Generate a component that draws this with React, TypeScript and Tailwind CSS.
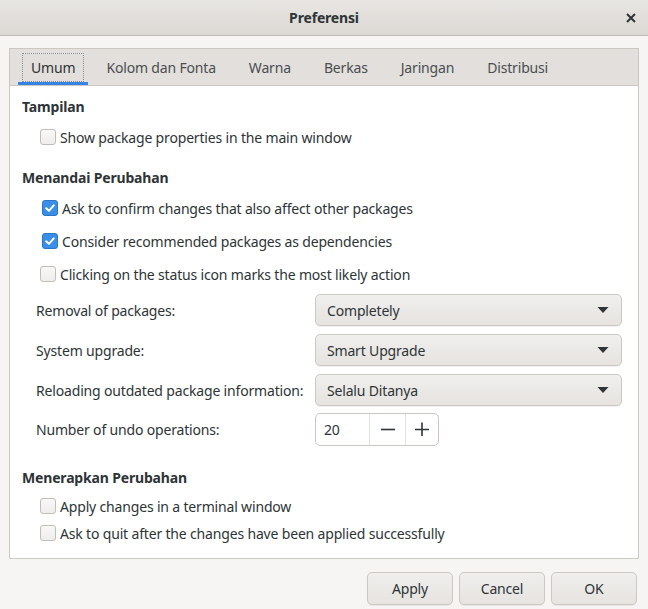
import React from 'react';

const font = { fontFamily: '"Noto Sans", "Liberation Sans", sans-serif' };

function CheckBox({ checked }: { checked?: boolean }) {
  if (checked) {
    return (
      <span className="flex h-[16px] w-[16px] shrink-0 items-center justify-center rounded-[3px] border border-[#2a76c6] bg-[#3a8ee6]">
        <svg width="12" height="12" viewBox="0 0 12 12">
          <path d="M2.2 6.2 L4.9 8.8 L9.8 3.4" fill="none" stroke="white" strokeWidth="2" strokeLinecap="round" strokeLinejoin="round" />
        </svg>
      </span>
    );
  }
  return <span className="h-[16px] w-[16px] shrink-0 rounded-[3px] border border-[#c3bdb7] bg-gradient-to-b from-[#f8f8f7] to-[#efedec]" />;
}

function Check({ label, checked }: { label: string; checked?: boolean }) {
  return (
    <div className={checked ? 'flex h-[26px] items-center gap-[4px] pl-[20px]' : 'flex h-[26px] items-center gap-[4px] pl-[18px]'}>
      <CheckBox checked={checked} />
      <span>{label}</span>
    </div>
  );
}

function Combo({ label, value }: { label: string; value: string }) {
  return (
    <div className="flex h-[32px] items-center">
      <span className="w-[293px] shrink-0 whitespace-nowrap pl-[14px]">{label}</span>
      <div className="flex h-[32px] w-[307px] items-center justify-between rounded-[5px] border border-[#cdc7c2] bg-gradient-to-b from-[#f0efed] to-[#e6e3e0] pl-[11px] pr-[12px] shadow-[0_1px_0_rgba(0,0,0,0.06)]">
        <span>{value}</span>
        <svg width="12" height="8" viewBox="0 0 12 8">
          <path d="M0.5 1 L11.5 1 L6 7 Z" fill="#2e3436" />
        </svg>
      </div>
    </div>
  );
}

export default function App() {
  const tabs = ['Umum', 'Kolom dan Fonta', 'Warna', 'Berkas', 'Jaringan', 'Distribusi'];

  return (
    <div className="flex h-[609px] w-[648px] flex-col bg-[#f6f5f4] text-[14px] tracking-[-0.17px] text-[#2e3436]" style={font}>
      {/* title bar */}
      <div className="relative flex h-[36px] shrink-0 items-center justify-center border-b border-[#c0bbb6] bg-gradient-to-b from-[#e8e6e3] to-[#dcd8d4]">
        <span className="font-bold">Preferensi</span>
        <svg className="absolute right-[12px] top-[13px]" width="10" height="10" viewBox="0 0 10 10">
          <path d="M1 1 L9 9 M9 1 L1 9" stroke="#2e3436" strokeWidth="2" />
        </svg>
      </div>

      <div className="flex flex-1 flex-col px-[9px] pt-[12px]">
        {/* notebook */}
        <div className="flex h-[511px] flex-col border border-[#cdc7c2]">
          <div className="flex h-[37px] shrink-0 items-stretch gap-[9px] border-b border-[#cdc7c2] bg-[#e2dfdc] pl-[8px]">
            {tabs.map((t, i) => (
              <div
                key={t}
                className={
                  i === 0
                    ? 'mr-[-3px] flex items-center border-b-[3px] border-[#3584e4] px-[4px] pt-[3px]'
                    : 'flex items-center px-[12px] text-[#4a4e50]'
                }
              >
                {i === 0 ? (
                  <span className="border border-dotted border-[#8b8e8f] px-[8px] py-[3px]">{t}</span>
                ) : (
                  <span>{t}</span>
                )}
              </div>
            ))}
          </div>

          <div className="flex flex-1 flex-col bg-white px-[12px] pt-[11px]">
            <div className="font-bold leading-[20px]">Tampilan</div>
            <div className="mt-[7px]">
              <Check label="Show package properties in the main window" />
            </div>

            <div className="mt-[18px] font-bold leading-[20px]">Menandai Perubahan</div>
            <div className="mt-[7px] flex flex-col gap-[7px]">
              <Check label="Ask to confirm changes that also affect other packages" checked />
              <Check label="Consider recommended packages as dependencies" checked />
              <Check label="Clicking on the status icon marks the most likely action" />
            </div>

            <div className="mt-[7px] flex flex-col gap-[8px]">
              <Combo label="Removal of packages:" value="Completely" />
              <Combo label="System upgrade:" value="Smart Upgrade" />
              <Combo label="Reloading outdated package information:" value="Selalu Ditanya" />
              <div className="mt-[-1px] flex h-[32px] items-center">
                <span className="w-[293px] shrink-0 pl-[14px]">Number of undo operations:</span>
                <div className="flex h-[33px] w-[124px] rounded-[5px] border border-[#cdc7c2] bg-white">
                  <span className="flex w-[53px] items-center pl-[8px]">20</span>
                  <span className="flex w-[36px] items-center justify-center border-l border-[#e3e0dd]">
                    <svg width="14" height="14" viewBox="0 0 14 14">
                      <path d="M0 7.5 H14" stroke="#2e3436" strokeWidth="1.6" />
                    </svg>
                  </span>
                  <span className="flex w-[33px] items-center justify-center border-l border-[#e3e0dd]">
                    <svg width="14" height="14" viewBox="0 0 14 14">
                      <path d="M0 7.5 H14 M7 0.5 V14.5" stroke="#2e3436" strokeWidth="1.6" />
                    </svg>
                  </span>
                </div>
              </div>
            </div>

            <div className="mt-[23px] font-bold leading-[20px]">Menerapkan Perubahan</div>
            <div className="mt-[5px] flex flex-col gap-[1px]">
              <Check label="Apply changes in a terminal window" />
              <Check label="Ask to quit after the changes have been applied successfully" />
            </div>
          </div>
        </div>

        {/* action buttons */}
        <div className="mt-[13px] flex justify-end gap-[6px] pr-[2px]">
          {['Apply', 'Cancel', 'OK'].map((b) => (
            <button
              key={b}
              className="flex h-[33px] w-[86px] items-center justify-center rounded-[5px] border border-[#cdc7c2] bg-gradient-to-b from-[#f0efed] to-[#e6e3e0] shadow-[0_1px_0_rgba(0,0,0,0.06)]"
            >
              {b}
            </button>
          ))}
        </div>
      </div>
    </div>
  );
}
